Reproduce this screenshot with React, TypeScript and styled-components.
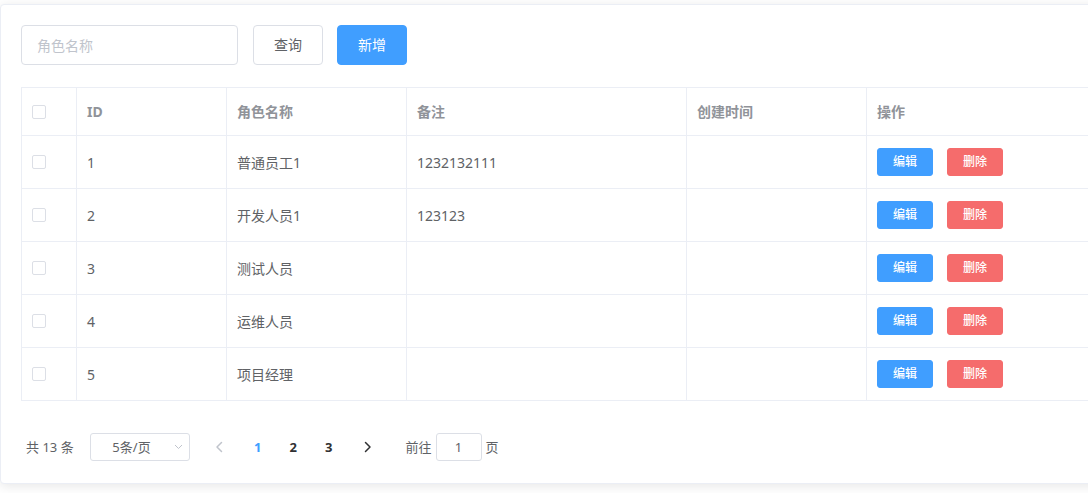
import styled, { createGlobalStyle } from 'styled-components';

const GlobalStyle = createGlobalStyle`
  html, body {
    margin: 0;
    padding: 0;
    background: #fff;
    overflow: hidden;
  }
  * {
    box-sizing: border-box;
  }
  body {
    font-family: "Noto Sans", "Noto Sans CJK SC", sans-serif;
    color: #606266;
  }
`;

const Page = styled.div`
  padding: 4px 0 0 0;
  overflow: hidden;
`;

const Card = styled.div`
  width: 1150px;
  background: #fff;
  border: 1px solid #ebeef5;
  border-radius: 4px;
  box-shadow: 0 2px 12px 0 rgba(0, 0, 0, 0.1);
  padding: 20px;
  margin-bottom: 12px;
`;

const Toolbar = styled.div`
  display: flex;
  align-items: center;
  margin-bottom: 22px;
`;

const SearchInput = styled.input`
  width: 217px;
  height: 40px;
  border: 1px solid #dcdfe6;
  border-radius: 4px;
  padding: 0 15px;
  font-family: inherit;
  font-size: 14px;
  color: #606266;
  outline: none;

  &::placeholder {
    color: #c0c4cc;
  }
`;

const Button = styled.button<{ $primary?: boolean; $gap: number }>`
  height: 40px;
  padding: 0 20px;
  margin-left: ${(p) => p.$gap}px;
  border-radius: 4px;
  font-family: inherit;
  font-size: 14px;
  line-height: 1;
  cursor: pointer;
  border: 1px solid ${(p) => (p.$primary ? '#409eff' : '#dcdfe6')};
  background: ${(p) => (p.$primary ? '#409eff' : '#fff')};
  color: ${(p) => (p.$primary ? '#fff' : '#606266')};
`;

const Table = styled.table`
  border-collapse: separate;
  border-spacing: 0;
  table-layout: fixed;
  width: 1106px;
  border-top: 1px solid #ebeef5;
  border-left: 1px solid #ebeef5;
  font-size: 14px;
`;

const Th = styled.th<{ $w: number }>`
  width: ${(p) => p.$w}px;
  padding: 12px 0;
  border-right: 1px solid #ebeef5;
  border-bottom: 1px solid #ebeef5;
  text-align: left;
  font-weight: 700;
  color: #909399;
  vertical-align: middle;
`;

const Td = styled.td`
  padding: 12px 0;
  border-right: 1px solid #ebeef5;
  border-bottom: 1px solid #ebeef5;
  color: #606266;
  vertical-align: middle;
`;

const Cell = styled.div`
  display: flex;
  align-items: center;
  gap: 14px;
  min-height: 23px;
  line-height: 23px;
  padding: 0 10px;
  white-space: nowrap;
`;

const Checkbox = styled.span`
  display: inline-block;
  width: 14px;
  height: 14px;
  border: 1px solid #dcdfe6;
  border-radius: 2px;
  background: #fff;
`;

const SmallButton = styled.button<{ $danger?: boolean }>`
  width: 56px;
  height: 28px;
  border-radius: 3px;
  border: 1px solid ${(p) => (p.$danger ? '#f56c6c' : '#409eff')};
  background: ${(p) => (p.$danger ? '#f56c6c' : '#409eff')};
  color: #fff;
  font-family: inherit;
  font-size: 12px;
  font-weight: 500;
  line-height: 1;
  padding: 0;
  cursor: pointer;
`;

const Pagination = styled.div`
  display: flex;
  align-items: center;
  margin-top: 30px;
  padding: 2px 5px;
  height: 32px;
  font-size: 13px;
  font-weight: 700;
  color: #303133;
`;

const PlainText = styled.span`
  font-weight: 400;
  color: #606266;
  line-height: 28px;
`;

const Total = styled(PlainText)`
  width: 64px;
`;

const SizeSelect = styled.div`
  position: relative;
  width: 100px;
  height: 28px;
  border: 1px solid #dcdfe6;
  border-radius: 3px;
  padding: 0 25px 0 8px;
  text-align: center;
  font-weight: 400;
  color: #606266;
  line-height: 26px;
  margin-right: 10px;
`;

const SelectArrow = styled.svg`
  position: absolute;
  right: 6px;
  top: 10px;
`;

const NavButton = styled.span<{ $side: 'prev' | 'next'; $disabled?: boolean }>`
  width: 40px;
  height: 28px;
  display: flex;
  align-items: center;
  justify-content: center;
  padding: ${(p) => (p.$side === 'prev' ? '0 2px 0 0' : '0 0 0 3px')};
  color: ${(p) => (p.$disabled ? '#c0c4cc' : '#303133')};
`;

const PageItem = styled.span<{ $active?: boolean }>`
  width: 35.5px;
  height: 28px;
  line-height: 28px;
  text-align: center;
  color: ${(p) => (p.$active ? '#409eff' : '#303133')};
`;

const Jump = styled.div`
  display: flex;
  align-items: center;
  margin-left: 19px;
`;

const JumpInput = styled.div`
  width: 46px;
  height: 28px;
  margin: 0 4px;
  border: 1px solid #dcdfe6;
  border-radius: 3px;
  text-align: center;
  line-height: 26px;
  font-weight: 400;
  color: #606266;
`;

const Chevron = ({ dir }: { dir: 'left' | 'right' }) => (
  <svg width="8" height="12" viewBox="0 0 8 12" fill="none">
    <polyline
      points={dir === 'left' ? '6.5,1.5 2,6 6.5,10.5' : '1.5,1.5 6,6 1.5,10.5'}
      stroke="currentColor"
      strokeWidth="1.5"
      strokeLinecap="round"
      strokeLinejoin="round"
    />
  </svg>
);

interface Role {
  id: number;
  name: string;
  remark: string;
  createdAt: string;
}

const roles: Role[] = [
  { id: 1, name: '普通员工1', remark: '1232132111', createdAt: '' },
  { id: 2, name: '开发人员1', remark: '123123', createdAt: '' },
  { id: 3, name: '测试人员', remark: '', createdAt: '' },
  { id: 4, name: '运维人员', remark: '', createdAt: '' },
  { id: 5, name: '项目经理', remark: '', createdAt: '' },
];

const columns = [
  { title: '', width: 55 },
  { title: 'ID', width: 150 },
  { title: '角色名称', width: 180 },
  { title: '备注', width: 280 },
  { title: '创建时间', width: 180 },
  { title: '操作', width: 260 },
];

const App = () => (
  <Page>
    <GlobalStyle />
    <Card>
      <Toolbar>
        <SearchInput placeholder="角色名称" />
        <Button $gap={15}>查询</Button>
        <Button $primary $gap={14}>新增</Button>
      </Toolbar>

      <Table>
        <thead>
          <tr>
            {columns.map((col, i) => (
              <Th key={i} $w={col.width}>
                <Cell>{i === 0 ? <Checkbox /> : col.title}</Cell>
              </Th>
            ))}
          </tr>
        </thead>
        <tbody>
          {roles.map((role) => (
            <tr key={role.id}>
              <Td><Cell><Checkbox /></Cell></Td>
              <Td><Cell>{role.id}</Cell></Td>
              <Td><Cell>{role.name}</Cell></Td>
              <Td><Cell>{role.remark}</Cell></Td>
              <Td><Cell>{role.createdAt}</Cell></Td>
              <Td>
                <Cell>
                  <SmallButton>编辑</SmallButton>
                  <SmallButton $danger>删除</SmallButton>
                </Cell>
              </Td>
            </tr>
          ))}
        </tbody>
      </Table>

      <Pagination>
        <Total>共 13 条</Total>
        <SizeSelect>
          5条/页
          <SelectArrow width="9" height="6" viewBox="0 0 9 6" fill="none">
            <polyline points="1,1 4.5,4.5 8,1" stroke="#c0c4cc" strokeWidth="1" />
          </SelectArrow>
        </SizeSelect>
        <NavButton $side="prev" $disabled><Chevron dir="left" /></NavButton>
        <PageItem $active>1</PageItem>
        <PageItem>2</PageItem>
        <PageItem>3</PageItem>
        <NavButton $side="next"><Chevron dir="right" /></NavButton>
        <Jump>
          <PlainText>前往</PlainText>
          <JumpInput>1</JumpInput>
          <PlainText>页</PlainText>
        </Jump>
      </Pagination>
    </Card>
  </Page>
);

export default App;
